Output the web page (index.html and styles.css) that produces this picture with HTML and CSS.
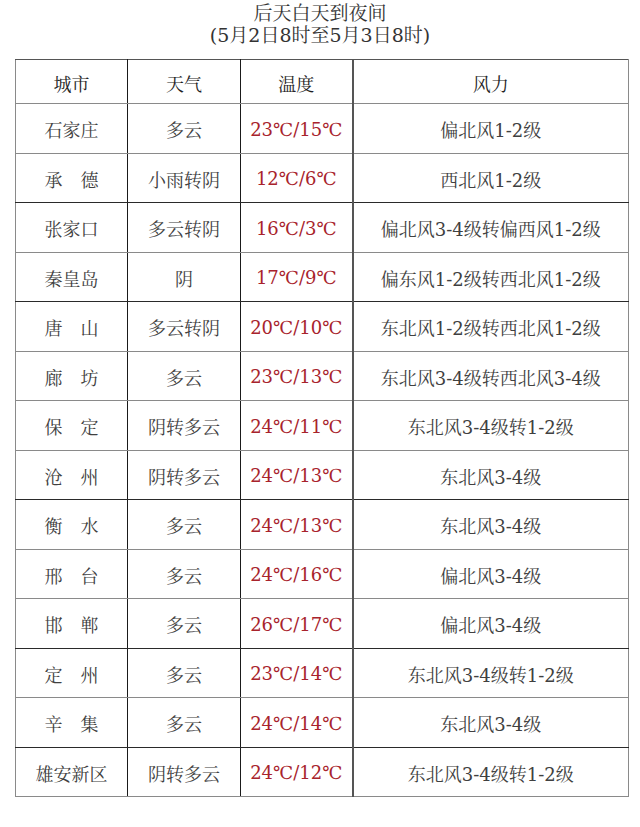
FILE: index.html
```html
<!DOCTYPE html>
<html lang="zh-CN">
<head>
<meta charset="utf-8">
<title>后天白天到夜间</title>
<link rel="stylesheet" href="styles.css">
</head>
<body>
<div class="page">
  <div class="title">
    <div class="title-line">后天白天到夜间</div>
    <div class="title-line">(5月2日8时至5月3日8时)</div>
  </div>
  <table class="weather">
    <colgroup>
      <col class="c-city"><col class="c-wx"><col class="c-temp"><col class="c-wind">
    </colgroup>
    <thead>
      <tr class="head"><th>城市</th><th>天气</th><th>温度</th><th>风力</th></tr>
    </thead>
    <tbody>
      <tr><td>石家庄</td><td>多云</td><td class="temp">23℃/15℃</td><td>偏北风1-2级</td></tr>
      <tr class="dark"><td>承　德</td><td>小雨转阴</td><td class="temp">12℃/6℃</td><td>西北风1-2级</td></tr>
      <tr><td>张家口</td><td>多云转阴</td><td class="temp">16℃/3℃</td><td>偏北风3-4级转偏西风1-2级</td></tr>
      <tr class="dark"><td>秦皇岛</td><td>阴</td><td class="temp">17℃/9℃</td><td>偏东风1-2级转西北风1-2级</td></tr>
      <tr><td>唐　山</td><td>多云转阴</td><td class="temp">20℃/10℃</td><td>东北风1-2级转西北风1-2级</td></tr>
      <tr><td>廊　坊</td><td>多云</td><td class="temp">23℃/13℃</td><td>东北风3-4级转西北风3-4级</td></tr>
      <tr><td>保　定</td><td>阴转多云</td><td class="temp">24℃/11℃</td><td>东北风3-4级转1-2级</td></tr>
      <tr class="dark"><td>沧　州</td><td>阴转多云</td><td class="temp">24℃/13℃</td><td>东北风3-4级</td></tr>
      <tr><td>衡　水</td><td>多云</td><td class="temp">24℃/13℃</td><td>东北风3-4级</td></tr>
      <tr><td>邢　台</td><td>多云</td><td class="temp">24℃/16℃</td><td>偏北风3-4级</td></tr>
      <tr class="dark"><td>邯　郸</td><td>多云</td><td class="temp">26℃/17℃</td><td>偏北风3-4级</td></tr>
      <tr><td>定　州</td><td>多云</td><td class="temp">23℃/14℃</td><td>东北风3-4级转1-2级</td></tr>
      <tr class="dark"><td>辛　集</td><td>多云</td><td class="temp">24℃/14℃</td><td>东北风3-4级</td></tr>
      <tr><td>雄安新区</td><td>阴转多云</td><td class="temp">24℃/12℃</td><td>东北风3-4级转1-2级</td></tr>
    </tbody>
  </table>
</div>
</body>
</html>
```

FILE: styles.css
```css
html, body {
  margin: 0;
  padding: 0;
  background: #ffffff;
}

body {
  font-family: "DejaVu Serif", "Noto Serif CJK SC", "Noto Sans CJK SC", serif;
  color: #404040;
}

.page {
  width: 640px;
  height: 827px;
  overflow: hidden;
}

.title {
  text-align: center;
  padding-top: 2px;
  font-size: 19px;
  line-height: 22px;
  color: #333333;
  font-family: "DejaVu Serif", "Noto Serif CJK SC", "Noto Sans CJK SC", serif;
}

.weather {
  margin: 13px 0 0 15px;
  width: 613px;
  border-collapse: collapse;
  table-layout: fixed;
  font-size: 18px;
}

.c-city { width: 112px; }
.c-wx { width: 113px; }
.c-temp { width: 112px; }
.c-wind { width: 276px; }

.weather th,
.weather td {
  border: 1px solid #8a8a8a;
  text-align: center;
  vertical-align: middle;
  padding: 2px 0 0 0;
  white-space: nowrap;
  font-weight: normal;
}

.weather th {
  color: #1e1e1e;
  height: 41px;
  border-top-color: #555555;
}

.weather tbody tr td {
  height: 46.5px;
}

.weather tbody tr.dark td {
  border-bottom-color: #2a2a2a;
}

.weather th:nth-child(1),
.weather td:nth-child(1),
.weather th:nth-child(2),
.weather td:nth-child(2) {
  border-right-color: #1a1a1a;
}

.weather th:nth-child(3),
.weather td:nth-child(3) {
  border-right: 2px solid #555555;
}

.weather td.temp {
  color: #a8232c;
}
```
